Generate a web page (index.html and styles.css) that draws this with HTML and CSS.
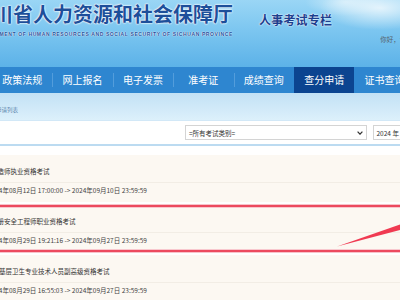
FILE: index.html
```html
<!DOCTYPE html>
<html lang="zh-CN">
<head>
  <meta charset="UTF-8" />
  <title>人事考试专栏 - 查分申请</title>
  <link rel="stylesheet" href="styles.css">
</head>
<body>
  <header class="banner">
    <div class="brand">
      <div class="brand-cn">四川省人力资源和社会保障厅</div>
      <div class="brand-en"><span>DEPARTMENT OF HUMAN RESOURCES AND SOCIAL SECURITY OF SICHUAN PROVINCE</span></div>
    </div>
    <div class="column-name">人事考试专栏</div>
    <div class="greet">你好，请登录</div>
  </header>

  <nav class="menu">
    <a>政策法规</a>
    <a>网上报名</a>
    <a>电子发票</a>
    <a>准考证</a>
    <a>成绩查询</a>
    <a class="active">查分申请</a>
    <a>证书查询</a>
  </nav>

  <div class="crumb">查分申请列表</div>

  <div class="filter">
    <div class="pick pick-wide">
      <span>=所有考试类别=</span>
      <svg width="6" height="4" viewBox="0 0 6 4"><polyline points="0.6,0.6 3,3.2 5.4,0.6" fill="none" stroke="#333" stroke-width="1.2"/></svg>
    </div>
    <div class="pick">2024 年</div>
  </div>

  <div class="list">
    <div class="item">
      <div class="item-title">一级建造师执业资格考试</div>
      <div class="item-time">2024年08月12日 17:00:00 -&gt; 2024年09月10日 23:59:59</div>
    </div>
    <div class="item marked">
      <div class="item-title">中级注册安全工程师职业资格考试</div>
      <div class="item-time">2024年08月29日 19:21:16 -&gt; 2024年09月27日 23:59:59</div>
    </div>
    <div class="item">
      <div class="item-title">2024年基层卫生专业技术人员副高级资格考试</div>
      <div class="item-time">2024年08月29日 16:55:03 -&gt; 2024年09月27日 23:59:59</div>
    </div>
  </div>

  <svg class="arrow" width="64" height="30" viewBox="0 0 64 30"><polygon points="1,26.5 64,4.5 64,10" fill="#f03a52"/></svg>
</body>
</html>
```

FILE: styles.css
```css
html, body { margin: 0; overflow: hidden; }
body { width: 400px; height: 300px; position: relative; font-family: "Noto Sans CJK SC", sans-serif; color: #333; background: #fff; }

.banner { height: 67px; display: flex; align-items: flex-start; overflow: hidden;
  background: radial-gradient(ellipse 60px 22px at 380px 8px, rgba(255,255,255,.75), rgba(255,255,255,0)),
              radial-gradient(ellipse 40px 14px at 345px 2px, rgba(255,255,255,.5), rgba(255,255,255,0)),
              linear-gradient(180deg, #9ad6f5 0%, #7cc6f0 45%, #5cb2e8 100%); }
.brand { margin-left: -27px; width: 260px; flex: none; }
.brand-cn { font-size: 20px; line-height: 24px; padding-top: 2px; font-weight: 700; color: #1d4f9a; white-space: nowrap;
  text-shadow: 0 0 1px #fff, 0 0 2px #fff, 0 0 2px #fff; }
.brand-en { margin-top: 5px; display: flex; justify-content: flex-end; white-space: nowrap; font: bold 5px/7px "Liberation Sans", sans-serif; letter-spacing: .62px; color: #1d4f9a;
  text-shadow: 0 0 1px #fff, 0 0 1px #fff; }
.column-name { flex: none; margin: 13px 0 0 26px; font-size: 12px; line-height: 14px; font-weight: 700; letter-spacing: .2px; color: #1c3f8e;
  text-shadow: 0 0 1px #fff, 0 0 2px #fff; }
.greet { flex: none; margin: 35px 0 0 48px; font-size: 6.5px; line-height: 8px; color: #55606a; white-space: nowrap; }

.menu { height: 26px; display: flex; margin-left: -8px; background: #2e86d0; }
.menu a { flex: none; width: 60.4px; text-align: center; font-size: 10px; line-height: 26px; color: #fff;
  background: linear-gradient(#539ddb, #539ddb) left center / 1px 14px no-repeat; }
.menu a:first-child { background: none; }
.menu a.active { background: #0b4490; }
.menu a.active + a { background: none; }

.crumb { height: 27px; box-sizing: border-box; padding-top: 13px; font-size: 5.5px; line-height: 9px; color: #5f86ad; text-indent: -15px;
  background: linear-gradient(180deg, #c2e1f5, #dcf0fb); }

.filter { height: 26px; box-sizing: border-box; display: flex; align-items: center; gap: 5.5px; padding-left: 185px;
  background: #fff; border-top: 1px solid #d2e8f7; border-bottom: 2px solid #bcdbf1; }
.pick { flex: none; height: 15px; box-sizing: border-box; display: flex; align-items: center; justify-content: space-between; padding: 0 3px;
  border: 1px solid #d4d4d4; font-size: 6.5px; color: #333; white-space: nowrap; }
.pick-wide { width: 182px; padding-right: 3px; }

.list { padding-top: 9px; margin: 0 -20px 0 -22px; }
.item { height: 47px; box-sizing: border-box; margin-bottom: 3px; padding-top: 9px; background: #fcf8f2; }
.item-title { font-size: 6.5px; line-height: 14px; padding-bottom: 4px; border-bottom: 1px solid #f2ede5; white-space: nowrap; color: #333; }
.item-time { padding: 1px 0 0 10px; font-size: 6.5px; line-height: 12px; white-space: nowrap; color: #444; }
.item.marked { box-shadow: 0 0 0 1px #f8c3ca, inset 0 0 0 2px #ec4a5f, inset 0 0 0 3px #f8c8ce; }

.arrow { position: absolute; left: 336px; top: 220px; }
```
